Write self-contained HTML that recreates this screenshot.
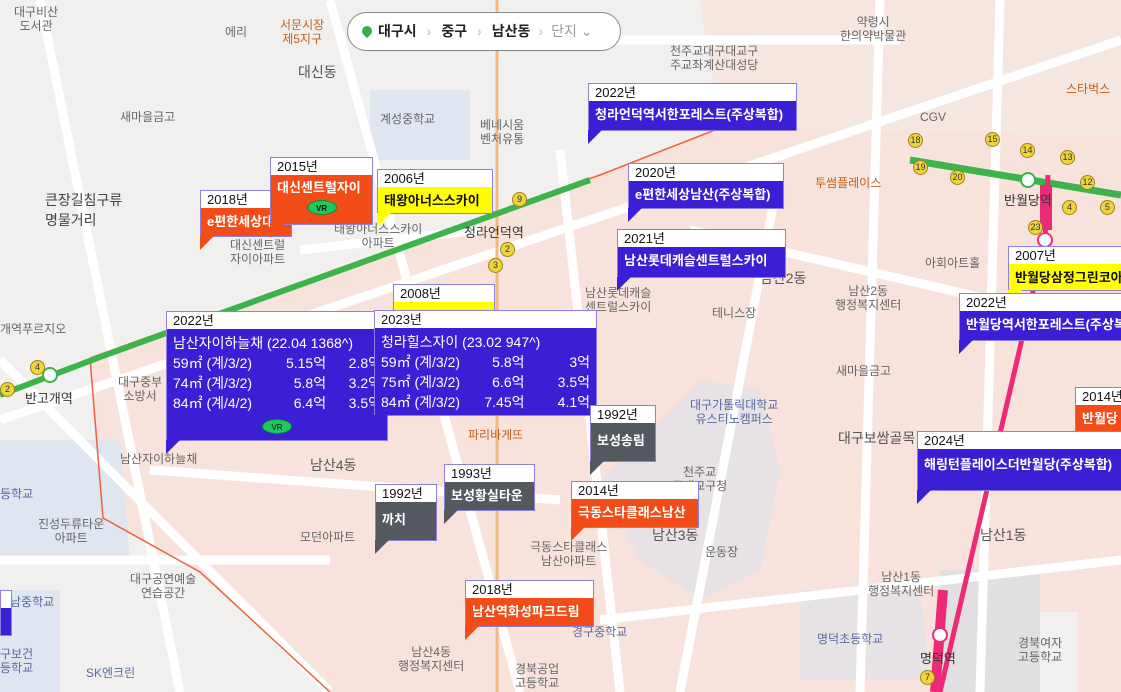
<!DOCTYPE html>
<html><head><meta charset="utf-8">
<style>
*{margin:0;padding:0;box-sizing:border-box}
body{width:1121px;height:692px;overflow:hidden;position:relative;background:#f1f0ee;font-family:"Liberation Sans","Noto Sans CJK KR",sans-serif}
svg.map{position:absolute;left:0;top:0}
.t{position:absolute;color:#666;font-size:12px;white-space:nowrap;line-height:14px;text-align:center}
.d{position:absolute;color:#555;font-size:14px;white-space:nowrap}
.lb{position:absolute;border:1px solid #8e7fe0;font-family:"Liberation Sans","Noto Sans CJK KR",sans-serif;white-space:nowrap;overflow:hidden}
.lb .y{background:#fff;color:#111;font-size:13px;height:17px;line-height:17px;padding-left:6px}
.lb .b{color:#fff;font-size:13px;font-weight:bold;padding:6px 6px 0 6px;line-height:16px;height:100%}
.bl{background:#3b1fd4}.or{background:#f24c18}.ye{background:#ffff00}.gr{background:#545960}
.ye .b{color:#111}
.tail{position:absolute;width:0;height:0;border-top:14px solid;border-right:14px solid transparent}
.vr{display:block;margin:6px auto 0;width:30px;height:15px;border-radius:50%;background:#1ec85a;color:#111;font-size:8px;text-align:center;line-height:15px;border:1px solid #0a8a3a}
.row{display:flex;font-weight:normal;font-size:14px;line-height:20px}
.row span:nth-child(1){width:112px}.row span:nth-child(2){width:72px;text-align:right}.row span:nth-child(3){width:66px;text-align:right}
.c{position:absolute;width:15px;height:15px;border-radius:50%;background:#f0d23a;border:1px solid #9a8420;font-size:9px;text-align:center;line-height:13px;color:#333}
</style></head><body>
<svg class="map" width="1121" height="692">
<polygon points="90,358 600,175 720,128 1121,135 1121,692 1078,692 1078,612 1040,612 1040,692 330,692 200,572 103,518" fill="#f7e3dc"/>
<polygon points="700,0 1121,0 1121,135 720,128" fill="#f5e6df"/>
<polygon points="700,380 760,390 780,470 760,570 700,600 640,560 600,480" fill="#e6e2e6"/>
<polygon points="800,590 920,590 930,680 800,680" fill="#e6e2e6"/>
<polygon points="940,570 1040,570 1040,692 940,692" fill="#e1dfe1"/>
<polygon points="0,440 120,440 130,560 0,560" fill="#dfe6ef"/>
<polygon points="0,590 60,590 60,692 0,692" fill="#dfe6ef"/>
<polygon points="370,90 470,90 470,160 370,160" fill="#dfe6ef"/>
<g stroke="#fff" stroke-width="9" fill="none">
<line x1="0" y1="420" x2="1121" y2="40"/>
<line x1="40" y1="0" x2="180" y2="692"/>
<line x1="0" y1="360" x2="330" y2="692"/>
<line x1="330" y1="0" x2="520" y2="692"/>
<line x1="560" y1="150" x2="620" y2="692"/>
<line x1="0" y1="560" x2="330" y2="560"/>
<line x1="600" y1="620" x2="1121" y2="560"/>
<line x1="780" y1="170" x2="680" y2="692"/>
<line x1="880" y1="0" x2="860" y2="692"/>
<line x1="1000" y1="0" x2="980" y2="692"/>
<line x1="300" y1="250" x2="480" y2="230"/>
<line x1="150" y1="470" x2="560" y2="500"/>
<line x1="690" y1="230" x2="1121" y2="330"/>
<line x1="560" y1="40" x2="900" y2="40"/>
</g>
<line x1="497" y1="0" x2="497" y2="692" stroke="#f3b882" stroke-width="3"/>
<polyline points="90,358 103,518 200,572 330,692" stroke="#f06040" stroke-width="1.5" fill="none"/>
<polyline points="90,358 600,175 720,128" stroke="#f06040" stroke-width="1.5" fill="none"/>
<polyline points="0,395 100,357 590,180" stroke="#3cb44b" stroke-width="6" fill="none"/>
<polyline points="910,160 1121,195" stroke="#3cb44b" stroke-width="7" fill="none"/>
<polyline points="1048,175 1045,240 940,692" stroke="#ee2a78" stroke-width="5" fill="none"/>
<line x1="1046" y1="185" x2="1046" y2="230" stroke="#ee2a78" stroke-width="12"/>
<line x1="943" y1="590" x2="935" y2="692" stroke="#ee2a78" stroke-width="10"/>
<circle cx="50" cy="375" r="7" fill="#fff" stroke="#3cb44b" stroke-width="2"/>
<circle cx="1028" cy="180" r="7" fill="#fff" stroke="#3cb44b" stroke-width="2"/>
<circle cx="1045" cy="240" r="7" fill="#fff" stroke="#ee2a78" stroke-width="2"/>
<circle cx="940" cy="635" r="7" fill="#fff" stroke="#ee2a78" stroke-width="2"/>
</svg>
<div class="c" style="left:30px;top:360px">4</div><div class="c" style="left:0;top:382px">2</div>
<div class="c" style="left:512px;top:192px">9</div><div class="c" style="left:500px;top:242px">2</div><div class="c" style="left:488px;top:258px">3</div>
<div class="c" style="left:908px;top:133px">18</div><div class="c" style="left:913px;top:160px">19</div><div class="c" style="left:950px;top:170px">20</div><div class="c" style="left:985px;top:132px">15</div><div class="c" style="left:1020px;top:143px">14</div><div class="c" style="left:1060px;top:150px">13</div><div class="c" style="left:1080px;top:175px">12</div><div class="c" style="left:1062px;top:200px">4</div><div class="c" style="left:1100px;top:200px">5</div><div class="c" style="left:1028px;top:220px">23</div><div class="c" style="left:920px;top:670px">7</div>
<div class="t" style="left:14px;top:5px">대구비산<br>도서관</div>
<div class="t" style="left:225px;top:25px">에리</div>
<div class="t" style="left:280px;top:18px;color:#c0601a">서문시장<br>제5지구</div>
<div class="d" style="left:298px;top:62px">대신동</div>
<div class="t" style="left:380px;top:112px">계성중학교</div>
<div class="t" style="left:480px;top:118px">베네시움<br>벤처유통</div>
<div class="t" style="left:120px;top:110px">새마을금고</div>
<div class="d" style="left:45px;top:190px;color:#444">큰장길침구류<br>명물거리</div>
<div class="t" style="left:535px;top:38px">대구제일교회</div>
<div class="t" style="left:670px;top:44px">천주교대구대교구<br>주교좌계산대성당</div>
<div class="t" style="left:840px;top:15px">약령시<br>한의약박물관</div>
<div class="t" style="left:920px;top:110px">CGV</div>
<div class="t" style="left:1066px;top:82px;color:#c0601a">스타벅스</div>
<div class="t" style="left:815px;top:176px;color:#c0601a">투썸플레이스</div>
<div class="d" style="left:1004px;top:190px;color:#333;font-size:13px">반월당역</div>
<div class="t" style="left:925px;top:256px">아회아트홀</div>
<div class="d" style="left:760px;top:268px">남산2동</div>
<div class="t" style="left:835px;top:284px">남산2동<br>행정복지센터</div>
<div class="t" style="left:712px;top:306px">테니스장</div>
<div class="t" style="left:836px;top:364px">새마을금고</div>
<div class="t" style="left:690px;top:398px;color:#5a6aa0">대구가톨릭대학교<br>유스티노캠퍼스</div>
<div class="d" style="left:838px;top:428px">대구보쌈골목</div>
<div class="d" style="left:980px;top:525px">남산1동</div>
<div class="d" style="left:652px;top:525px">남산3동</div>
<div class="t" style="left:705px;top:545px">운동장</div>
<div class="t" style="left:868px;top:570px">남산1동<br>행정복지센터</div>
<div class="t" style="left:817px;top:632px;color:#5a6aa0">명덕초등학교</div>
<div class="d" style="left:920px;top:648px;color:#333;font-size:13px">명덕역</div>
<div class="t" style="left:1018px;top:636px">경북여자<br>고등학교</div>
<div class="t" style="left:672px;top:465px">천주교<br>구대교구청</div>
<div class="d" style="left:310px;top:455px">남산4동</div>
<div class="t" style="left:120px;top:452px">남산자이하늘채</div>
<div class="t" style="left:118px;top:375px">대구중부<br>소방서</div>
<div class="d" style="left:25px;top:388px;color:#333;font-size:13px">반고개역</div>
<div class="t" style="left:38px;top:517px">진성두류타운<br>아파트</div>
<div class="t" style="left:300px;top:530px">모던아파트</div>
<div class="t" style="left:130px;top:572px">대구공연예술<br>연습공간</div>
<div class="t" style="left:10px;top:595px;color:#5a6aa0">남중학교</div>
<div class="t" style="left:0;top:647px;color:#5a6aa0">구보건<br>등학교</div>
<div class="t" style="left:86px;top:666px;color:#5a6aa0">SK엔크린</div>
<div class="t" style="left:398px;top:645px">남산4동<br>행정복지센터</div>
<div class="t" style="left:515px;top:662px">경북공업<br>고등학교</div>
<div class="t" style="left:572px;top:625px;color:#5a6aa0">경구중학교</div>
<div class="t" style="left:530px;top:540px">극동스타클래스<br>남산아파트</div>
<div class="t" style="left:468px;top:428px;color:#c0601a">파리바게뜨</div>
<div class="t" style="left:585px;top:286px">남산롯데캐슬<br>센트럴스카이</div>
<div class="t" style="left:230px;top:238px">대신센트럴<br>자이아파트</div>
<div class="t" style="left:334px;top:222px">태왕아너스스카이<br>아파트</div>
<div class="d" style="left:464px;top:222px;color:#333;font-size:13px">청라언덕역</div>
<div class="t" style="left:0;top:322px">개역푸르지오</div>
<div class="t" style="left:0;top:487px;color:#5a6aa0">등학교</div>

<div style="position:absolute;left:347px;top:12px;width:274px;height:39px;border:1px solid #888;border-radius:20px;background:#fff;font-size:14px;font-weight:bold;color:#222;line-height:37px;padding-left:14px;white-space:nowrap">
<span style="display:inline-block;width:10px;height:10px;border-radius:50% 50% 50% 0;transform:rotate(-45deg);background:#2db34a;margin-right:6px"></span>대구시<span style="color:#ccc;margin:0 10px">›</span>중구<span style="color:#ccc;margin:0 10px">›</span>남산동<span style="color:#ccc;margin:0 8px">›</span><span style="color:#999;font-weight:normal">단지 ⌄</span></div>

<div class="lb or" style="left:200px;top:190px;width:92px;height:47px"><div class="y">2018년</div><div class="b">e편한세상대</div></div>
<div class="tail" style="left:200px;top:236px;color:#f24c18"></div>
<div class="lb or" style="left:270px;top:157px;width:103px;height:68px"><div class="y">2015년</div><div class="b" style="padding-top:5px">대신센트럴자이<span class="vr" style="margin-top:4px">VR</span></div></div>
<div class="tail" style="left:270px;top:224px;color:#f24c18"></div>
<div class="lb ye" style="left:377px;top:169px;width:116px;height:45px"><div class="y">2006년</div><div class="b">태왕아너스스카이</div></div>
<div class="tail" style="left:377px;top:213px;color:#ffff00"></div>
<div class="lb ye" style="left:393px;top:284px;width:102px;height:28px"><div class="y">2008년</div><div class="b"></div></div>
<div class="lb bl" style="left:588px;top:83px;width:209px;height:48px"><div class="y">2022년</div><div class="b">청라언덕역서한포레스트(주상복합)</div></div>
<div class="tail" style="left:588px;top:130px;color:#3b1fd4"></div>
<div class="lb bl" style="left:628px;top:163px;width:156px;height:46px"><div class="y">2020년</div><div class="b">e편한세상남산(주상복합)</div></div>
<div class="tail" style="left:628px;top:208px;color:#3b1fd4"></div>
<div class="lb bl" style="left:617px;top:229px;width:169px;height:49px"><div class="y">2021년</div><div class="b">남산롯데캐슬센트럴스카이</div></div>
<div class="tail" style="left:617px;top:277px;color:#3b1fd4"></div>
<div class="lb bl" style="left:166px;top:311px;width:222px;height:130px"><div class="y">2022년</div><div class="b" style="font-weight:normal;padding-top:4px"><div style="font-size:14px;line-height:20px">남산자이하늘채 (22.04 1368^)</div><div class="row"><span>59㎡ (계/3/2)</span><span>5.15억</span><span>2.8억</span></div><div class="row"><span>74㎡ (계/3/2)</span><span>5.8억</span><span>3.2억</span></div><div class="row"><span>84㎡ (계/4/2)</span><span>6.4억</span><span>3.5억</span></div><span class="vr" style="margin-top:6px">VR</span></div></div>
<div class="tail" style="left:166px;top:440px;color:#3b1fd4"></div>
<div class="lb bl" style="left:374px;top:310px;width:223px;height:106px"><div class="y">2023년</div><div class="b" style="font-weight:normal;padding-top:4px"><div style="font-size:14px;line-height:20px">청라힐스자이 (23.02 947^)</div><div class="row"><span>59㎡ (계/3/2)</span><span>5.8억</span><span style="width:24px"></span><span style="width:60px;text-align:right">3억</span></div><div class="row"><span>75㎡ (계/3/2)</span><span>6.6억</span><span style="width:24px"></span><span style="width:60px;text-align:right">3.5억</span></div><div class="row"><span>84㎡ (계/3/2)</span><span>7.45억</span><span style="width:24px"></span><span style="width:60px;text-align:right">4.1억</span></div></div></div>
<div class="tail" style="left:374px;top:415px;color:#3b1fd4"></div>
<div class="lb gr" style="left:590px;top:405px;width:66px;height:57px"><div class="y">1992년</div><div class="b" style="padding-top:10px">보성송림</div></div>
<div class="tail" style="left:590px;top:461px;color:#545960"></div>
<div class="lb gr" style="left:444px;top:464px;width:91px;height:47px"><div class="y">1993년</div><div class="b">보성황실타운</div></div>
<div class="tail" style="left:444px;top:510px;color:#545960"></div>
<div class="lb gr" style="left:375px;top:484px;width:62px;height:57px"><div class="y">1992년</div><div class="b" style="padding-top:10px">까치</div></div>
<div class="tail" style="left:375px;top:540px;color:#545960"></div>
<div class="lb or" style="left:571px;top:481px;width:128px;height:47px"><div class="y">2014년</div><div class="b">극동스타클래스남산</div></div>
<div class="tail" style="left:571px;top:527px;color:#f24c18"></div>
<div class="lb or" style="left:465px;top:580px;width:129px;height:47px"><div class="y">2018년</div><div class="b">남산역화성파크드림</div></div>
<div class="tail" style="left:465px;top:626px;color:#f24c18"></div>
<div class="lb or" style="left:1075px;top:387px;width:50px;height:54px"><div class="y">2014년</div><div class="b">반월당</div></div>
<div class="tail" style="left:1075px;top:440px;color:#f24c18"></div>
<div class="lb ye" style="left:1008px;top:246px;width:118px;height:45px"><div class="y">2007년</div><div class="b">반월당삼정그린코아</div></div>
<div class="tail" style="left:1008px;top:290px;color:#ffff00"></div>
<div class="lb bl" style="left:959px;top:293px;width:166px;height:48px"><div class="y">2022년</div><div class="b">반월당역서한포레스트(주상복</div></div>
<div class="tail" style="left:959px;top:340px;color:#3b1fd4"></div>
<div class="lb bl" style="left:917px;top:431px;width:208px;height:60px"><div class="y">2024년</div><div class="b" style="padding-top:8px">해링턴플레이스더반월당(주상복합)</div></div>
<div class="tail" style="left:917px;top:490px;color:#3b1fd4"></div>
<div class="lb bl" style="left:0;top:590px;width:12px;height:46px"><div class="y"></div></div>
</body></html>
